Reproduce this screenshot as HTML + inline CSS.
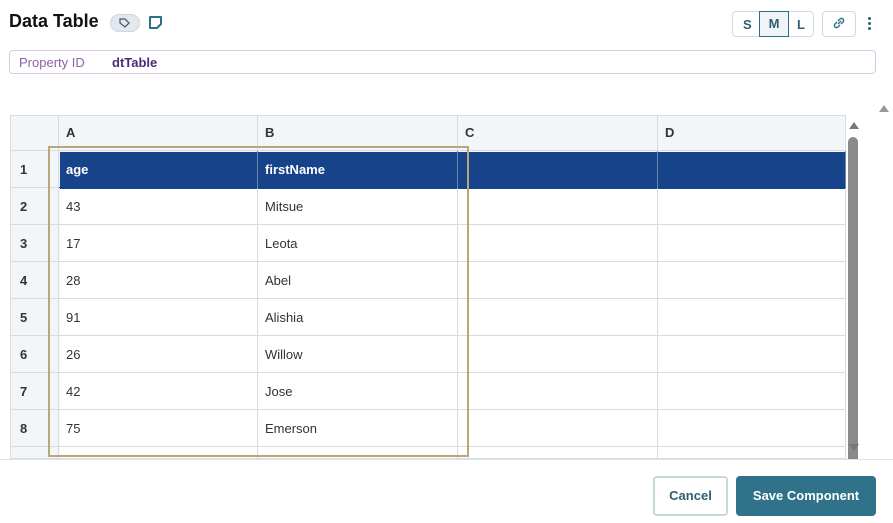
<!DOCTYPE html>
<html><head><style>
*{box-sizing:border-box;margin:0;padding:0}
body{width:893px;height:523px;overflow:hidden;background:#fff;font-family:"Liberation Sans",sans-serif;position:relative;color:#333}
.a{position:absolute}
.cell{position:absolute;border-right:1px solid #d5dde3;border-bottom:1px solid #d5dde3;font-size:13px;padding-left:7px;display:flex;align-items:center}
</style></head><body>
<div class="a" style="left:9px;top:11px;font-size:18px;font-weight:bold;color:#111">Data Table</div>
<div class="a" style="left:110px;top:14px;width:30px;height:18px;border-radius:9px;background:#e3e8ee;border:1px solid #cfd6dd"></div>
<svg class="a" style="left:118px;top:17px" width="13" height="12" viewBox="0 0 13 12"><path d="M2 2h5l4 4-4 4-5-4z" fill="none" stroke="#456" stroke-width="1.2"/></svg>
<svg class="a" style="left:148px;top:15px" width="15" height="15" viewBox="0 0 15 15"><path d="M2 2h11v7l-4 4H2z" fill="none" stroke="#2f6f86" stroke-width="2" stroke-linejoin="round"/></svg>
<div class="a" style="left:732px;top:11px;width:82px;height:26px;border:1px solid #cfd9df;border-radius:4px;font-size:13px;font-weight:bold;color:#2f5f70">
<span class="a" style="left:10px;top:5px">S</span>
<div class="a" style="left:26px;top:-1px;width:30px;height:26px;border:1px solid #2f6f86;background:#eef4f7;text-align:center;line-height:24px">M</div>
<span class="a" style="left:64px;top:5px">L</span></div>
<div class="a" style="left:822px;top:11px;width:34px;height:26px;border:1px solid #cfd9df;border-radius:4px"></div>
<svg class="a" style="left:832px;top:16px" width="14" height="14" viewBox="0 0 14 14"><path d="M6 8l3-3M5 6l-2 2a2 2 0 003 3l2-2M9 8l2-2a2 2 0 00-3-3L6 5" fill="none" stroke="#2f6f86" stroke-width="1.4"/></svg>
<div class="a" style="left:868px;top:17px;width:3px;height:3px;border-radius:2px;background:#2f5f70;box-shadow:0 5px 0 #2f5f70,0 10px 0 #2f5f70"></div>
<div class="a" style="left:9px;top:50px;width:867px;height:24px;border:1px solid #dcc7e3;border-radius:4px;font-size:13px">
<span class="a" style="left:9px;top:4px;color:#8a62a8">Property ID</span>
<span class="a" style="left:102px;top:4px;color:#4b2a78;font-weight:bold">dtTable</span></div>
<div class="a" style="left:10px;top:115px;width:836px;height:344px;overflow:hidden;border-top:1px solid #d5dde3;border-left:1px solid #d5dde3">
<div class="a" style="left:0;top:0;width:836px;height:36px;background:#f3f6f8"></div>
<div class="a" style="left:0;top:0;width:49px;height:344px;background:#f3f6f8"></div>
<div class="a" style="left:49px;top:36px;width:787px;height:37px;background:#17438a"></div>
</div>
<div id="g"></div>
<div class="a" style="left:848px;top:137px;width:10px;height:322px;background:#8a8a8a;border-radius:5px 5px 0 0"></div>
<div class="a" style="left:849px;top:122px;width:0;height:0;border-left:5px solid transparent;border-right:5px solid transparent;border-bottom:7px solid #777"></div>
<div class="a" style="left:849px;top:444px;width:0;height:0;border-left:5px solid transparent;border-right:5px solid transparent;border-top:7px solid #777"></div>
<div class="a" style="left:879px;top:105px;width:0;height:0;border-left:5px solid transparent;border-right:5px solid transparent;border-bottom:7px solid #999"></div>
<div class="a" style="left:0;top:459px;width:893px;height:1px;background:#dde3e8"></div>
<div class="a" style="left:48px;top:146px;width:421px;height:311px;border:2px solid #b8a878"></div>
<div class="a" style="left:653px;top:476px;width:75px;height:40px;border:2px solid #c8d6dd;border-radius:4px;font-size:13px;font-weight:bold;color:#2f5f70;text-align:center;line-height:36px">Cancel</div>
<div class="a" style="left:736px;top:476px;width:140px;height:40px;background:#2f7289;border-radius:4px;font-size:13px;font-weight:bold;color:#fff;text-align:center;line-height:40px">Save Component</div>
<script>
var g=document.getElementById('g'),h='';
var cols=[[10,49],[59,199],[258,200],[458,200],[658,188]];
var hd=['','A','B','C','D'];
var data=[['age','firstName'],['43','Mitsue'],['17','Leota'],['28','Abel'],['91','Alishia'],['26','Willow'],['42','Jose'],['75','Emerson'],['','']];
for(var c=0;c<5;c++){h+='<div class="cell" style="left:'+cols[c][0]+'px;top:115px;width:'+cols[c][1]+'px;height:36px;font-weight:bold;color:#333">'+hd[c]+'</div>';}
for(var r=0;r<9;r++){var t=151+r*37,hh=r==8?12:37;
for(var c=0;c<5;c++){var txt=c==0?(r<8?r+1:''):(c<3?data[r][c-1]:'');
var st=r==0&&c>0?'color:#fff;font-weight:bold;border-right-color:#6d86b0;border-bottom-color:#17438a':(c==0?'font-weight:bold;color:#333;padding-left:10px':'color:#333');
h+='<div class="cell" style="left:'+cols[c][0]+'px;top:'+t+'px;width:'+cols[c][1]+'px;height:'+hh+'px;'+st+'">'+txt+'</div>';}}
g.innerHTML=h;
</script>
</body></html>
